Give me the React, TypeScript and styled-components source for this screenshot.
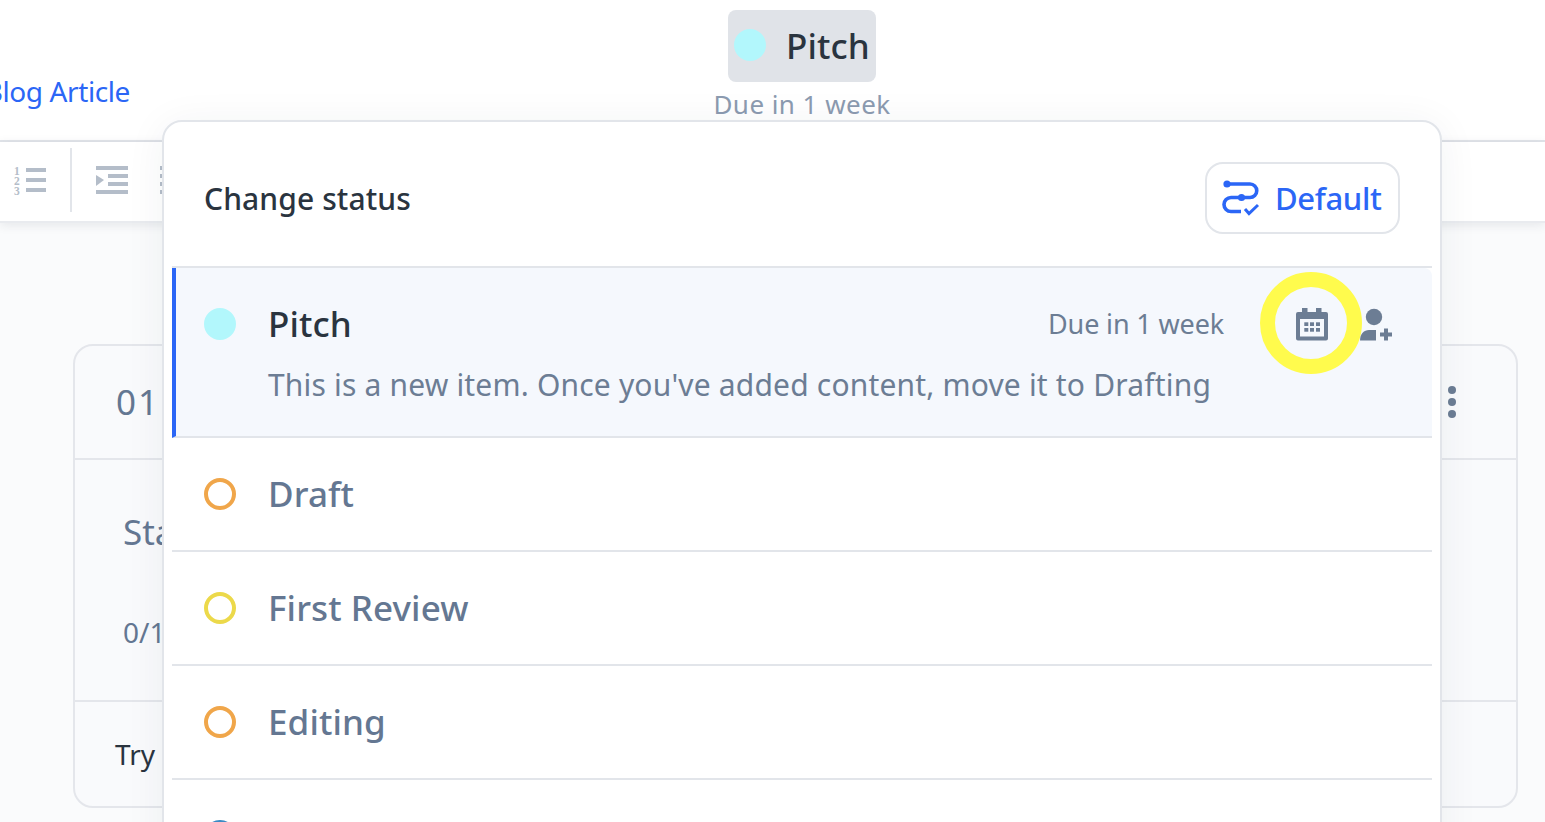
import styled, { createGlobalStyle } from 'styled-components'

const GlobalStyle = createGlobalStyle`
  html, body {
    margin: 0;
    height: 100%;
    background: #fafbfc;
    font-family: 'Noto Sans', 'Liberation Sans', sans-serif;
  }
  #root {
    height: 822px;
    overflow: hidden;
  }
  * { box-sizing: border-box; }
`

const Page = styled.div`
  position: relative;
  width: 1545px;
  height: 822px;
  overflow: hidden;
  background: #fafbfc;
`

const Header = styled.header`
  height: 142px;
  background: #fff;
  border-bottom: 2px solid #e2e5ea;
  display: grid;
  grid-template-columns: 130px auto;
  column-gap: 584px;
  justify-content: start;
`

const BlogLink = styled.a`
  display: flex;
  justify-content: flex-end;
  overflow: hidden;
  white-space: nowrap;
  margin-top: 71px;
  height: 40px;
  line-height: 40px;
  font-size: 28px;
  letter-spacing: -0.4px;
  color: #2b66f6;
`

const StatusBlock = styled.div`
  padding-top: 10px;
  display: flex;
  flex-direction: column;
  align-items: center;
  width: 176px;
`

const StatusChip = styled.div`
  width: 148px;
  height: 72px;
  border-radius: 8px;
  background: #e0e3e8;
  display: flex;
  align-items: center;
  padding: 0 0 2px 6px;
  gap: 20px;
  font-size: 35px;
  font-weight: 500;
  letter-spacing: 0.1px;
  color: #2a343f;
`

const StatusDue = styled.div`
  margin-top: 5px;
  font-size: 26px;
  line-height: 34px;
  letter-spacing: 0.45px;
  white-space: nowrap;
  color: #8c9bb0;
`

const Toolbar = styled.div`
  height: 81px;
  background: #fff;
  box-shadow: 0 2px 10px rgba(40, 50, 70, 0.1);
  border-bottom: 2px solid #e9ebef;
  display: flex;
  align-items: flex-start;
  padding: 6px 0 0 14px;
`

const ToolIcon = styled.svg<{ $offset?: number }>`
  margin-top: 18px;
  margin-left: ${({ $offset }) => $offset ?? 0}px;
  display: block;
  flex: none;
`

const ToolDivider = styled.div`
  width: 2px;
  height: 64px;
  margin: 0 24px 0 22px;
  background: #e2e5ea;
`

const Card = styled.section`
  position: relative;
  margin: 121px 0 0 73px;
  width: 1445px;
  height: 464px;
  background: #f9fafc;
  border: 2px solid #e4e6eb;
  border-radius: 20px;
  display: grid;
  grid-template-rows: 114px 242px 1fr;
`

const CardTop = styled.div`
  display: flex;
  align-items: center;
  justify-content: space-between;
  padding: 0 60px 0 41px;
  border-bottom: 2px solid #e4e6eb;
`

const CardNumber = styled.span`
  margin-top: -2px;
  font-size: 35px;
  letter-spacing: 2px;
  color: #647792;
`

const Kebab = styled.svg`
  display: block;
`

const CardBody = styled.div`
  padding: 48px 0 0 48px;
  border-bottom: 2px solid #e4e6eb;
  color: #647792;
`

const StartText = styled.div`
  font-size: 35px;
  line-height: 48px;
`

const CountText = styled.div`
  margin-top: 56px;
  font-size: 28px;
  line-height: 40px;
`

const CardFoot = styled.div`
  padding: 32px 0 0 40px;
  font-size: 28px;
  line-height: 40px;
  color: #2a343f;
`

const Popover = styled.div`
  position: absolute;
  top: 120px;
  left: 162px;
  width: 1280px;
  height: 780px;
  background: #fff;
  border: 2px solid #e2e5ea;
  border-radius: 20px;
  box-shadow: 0 4px 40px rgba(40, 50, 70, 0.06);
  padding: 0 8px;
`

const PopoverHead = styled.div`
  height: 146px;
  display: flex;
  align-items: center;
  justify-content: space-between;
  padding: 8px 32px 0 32px;
  border-bottom: 2px solid #e2e5ea;
`

const PopoverTitle = styled.div`
  font-size: 30px;
  font-weight: 500;
  letter-spacing: 0.1px;
  color: #2a343f;
`

const DefaultButton = styled.button`
  width: 195px;
  height: 72px;
  border: 2px solid #e2e5ea;
  border-radius: 18px;
  background: #fff;
  display: flex;
  align-items: center;
  gap: 15px;
  padding: 0 0 0 15px;
  font-family: inherit;
  font-size: 31px;
  font-weight: 500;
  letter-spacing: -0.35px;
  color: #2b66f6;
`

const Row = styled.div<{ $active?: boolean }>`
  display: flex;
  flex-direction: column;
  height: ${({ $active }) => ($active ? '170px' : '114px')};
  padding: ${({ $active }) => ($active ? '36px 38px 0 28px' : '36px 38px 0 32px')};
  border-bottom: 2px solid #e2e5ea;
  background: ${({ $active }) => ($active ? '#f5f8fd' : '#fff')};
  border-left: ${({ $active }) => ($active ? '4px solid #2b66f6' : 'none')};
  border-top-right-radius: ${({ $active }) => ($active ? '8px' : '0')};
`

const RowMain = styled.div`
  display: flex;
  align-items: center;
  height: 40px;
`

const Dot = styled.span<{ $color: string; $filled?: boolean }>`
  flex: none;
  width: 32px;
  height: 32px;
  border-radius: 50%;
  border: 4px solid ${({ $color }) => $color};
  background: ${({ $filled, $color }) => ($filled ? $color : 'transparent')};
`

const RowName = styled.div<{ $active?: boolean }>`
  margin: -2px 0 0 32px;
  font-size: 35px;
  font-weight: 500;
  letter-spacing: 0.1px;
  color: ${({ $active }) => ($active ? '#2a343f' : '#647792')};
`

const RowDue = styled.div`
  margin: -2px 0 0 auto;
  font-size: 27px;
  letter-spacing: -0.15px;
  color: #6c7d94;
`

const IconButton = styled.span<{ $ring?: boolean }>`
  position: relative;
  display: flex;
  margin-left: ${({ $ring }) => ($ring ? '72px' : '32px')};

  ${({ $ring }) =>
    $ring &&
    `&::after {
      content: '';
      box-sizing: border-box;
      position: absolute;
      left: -36px;
      top: -36px;
      width: 102px;
      height: 102px;
      border-radius: 50%;
      border: 15px solid #fffb4d;
    }`}
`

const RowDescription = styled.div`
  margin: 21px 0 0 64px;
  font-size: 30px;
  line-height: 40px;
  letter-spacing: 0.18px;
  white-space: nowrap;
  color: #6c7d94;
`

const statuses = [
  { name: 'Draft', color: '#f0a64a' },
  { name: 'First Review', color: '#ecd94a' },
  { name: 'Editing', color: '#f0a64a' },
  { name: 'Ready', color: '#3a8ac4' },
]

function NumberedListIcon() {
  return (
    <ToolIcon width="34" height="30" viewBox="0 0 34 30" fill="#b4bdc9">
      <g fontFamily="'Liberation Serif', serif" fontWeight="700" fontSize="11.5">
        <text x="0" y="9">1</text>
        <text x="0" y="19">2</text>
        <text x="0" y="29">3</text>
      </g>
      <rect x="12" y="2" width="20" height="4" />
      <rect x="12" y="12" width="20" height="4" />
      <rect x="12" y="22" width="20" height="4" />
    </ToolIcon>
  )
}

function IndentIcon() {
  return (
    <ToolIcon width="32" height="30" viewBox="0 0 32 30" fill="#b4bdc9">
      <rect x="0" y="0" width="32" height="4" />
      <rect x="12" y="8" width="20" height="4" />
      <rect x="12" y="16" width="20" height="4" />
      <rect x="0" y="24" width="32" height="4" />
      <path d="M0 9 L8 14 L0 20 Z" />
    </ToolIcon>
  )
}

function DashedIcon() {
  return (
    <ToolIcon $offset={32} width="4" height="30" viewBox="0 0 4 30" fill="#b4bdc9">
      <rect x="0" y="0" width="4" height="4" />
      <rect x="0" y="8" width="4" height="4" />
      <rect x="0" y="16" width="4" height="4" />
      <rect x="0" y="24" width="4" height="4" />
    </ToolIcon>
  )
}

function WorkflowIcon() {
  return (
    <svg width="38" height="36" viewBox="0 0 38 36" fill="none" stroke="#2b66f6" strokeWidth="3.6">
      <path d="M5 4 H28 a6.75 6.75 0 0 1 0 13.5 H9 a7 7 0 0 0 0 14 H19" />
      <circle cx="5" cy="4" r="3.6" fill="#2b66f6" stroke="none" />
      <circle cx="19.5" cy="17.5" r="3.6" fill="#2b66f6" stroke="none" />
      <path d="M23 29 L27 33.5 L36 25" strokeWidth="3" />
    </svg>
  )
}

function CalendarIcon() {
  return (
    <svg width="32" height="33" viewBox="0 0 32 33" fill="#6c7d94">
      <rect x="6" y="0" width="5.5" height="6" />
      <rect x="20" y="0" width="5.5" height="6" />
      <path fillRule="evenodd" d="M2 4 H30 a2 2 0 0 1 2 2 V30.5 a2 2 0 0 1 -2 2 H2 a2 2 0 0 1 -2 -2 V6 a2 2 0 0 1 2 -2 Z M4 11 V28.5 H28 V11 Z" />
      <rect x="8.3" y="14.3" width="4" height="3.7" />
      <rect x="14" y="14.3" width="4" height="3.7" />
      <rect x="20" y="14.3" width="4" height="3.7" />
      <rect x="8.3" y="20" width="4" height="3.7" />
      <rect x="14" y="20" width="4" height="3.7" />
      <rect x="20" y="20" width="4" height="3.7" />
    </svg>
  )
}

function AddPersonIcon() {
  return (
    <svg width="34" height="33" viewBox="0 0 34 33" fill="#6c7d94">
      <circle cx="14" cy="9" r="8.2" />
      <path d="M0 32.5 C0 26 4 22 9 22 H16 V32.5 Z" />
      <rect x="24" y="20.5" width="4" height="12" />
      <rect x="20" y="24.5" width="12" height="4" />
    </svg>
  )
}

export default function App() {
  return (
    <Page>
      <GlobalStyle />
      <Header>
        <BlogLink>Blog Article</BlogLink>
        <StatusBlock>
          <StatusChip>
            <Dot $color="#b2f7fc" $filled />
            Pitch
          </StatusChip>
          <StatusDue>Due in 1 week</StatusDue>
        </StatusBlock>
      </Header>
      <Toolbar>
        <NumberedListIcon />
        <ToolDivider />
        <IndentIcon />
        <DashedIcon />
      </Toolbar>
      <Card>
        <CardTop>
          <CardNumber>01</CardNumber>
          <Kebab width="8" height="32" viewBox="0 0 8 32" fill="#6c7d94">
            <circle cx="4" cy="4" r="4" />
            <circle cx="4" cy="16" r="4" />
            <circle cx="4" cy="28" r="4" />
          </Kebab>
        </CardTop>
        <CardBody>
          <StartText>Start</StartText>
          <CountText>0/1</CountText>
        </CardBody>
        <CardFoot>Try this</CardFoot>
      </Card>
      <Popover>
        <PopoverHead>
          <PopoverTitle>Change status</PopoverTitle>
          <DefaultButton>
            <WorkflowIcon />
            Default
          </DefaultButton>
        </PopoverHead>
        <Row $active>
          <RowMain>
            <Dot $color="#b2f7fc" $filled />
            <RowName $active>Pitch</RowName>
            <RowDue>Due in 1 week</RowDue>
            <IconButton $ring>
              <CalendarIcon />
            </IconButton>
            <IconButton>
              <AddPersonIcon />
            </IconButton>
          </RowMain>
          <RowDescription>
            This is a new item. Once you've added content, move it to Drafting
          </RowDescription>
        </Row>
        {statuses.map((status) => (
          <Row key={status.name}>
            <RowMain>
              <Dot $color={status.color} />
              <RowName>{status.name}</RowName>
            </RowMain>
          </Row>
        ))}
      </Popover>
    </Page>
  )
}
